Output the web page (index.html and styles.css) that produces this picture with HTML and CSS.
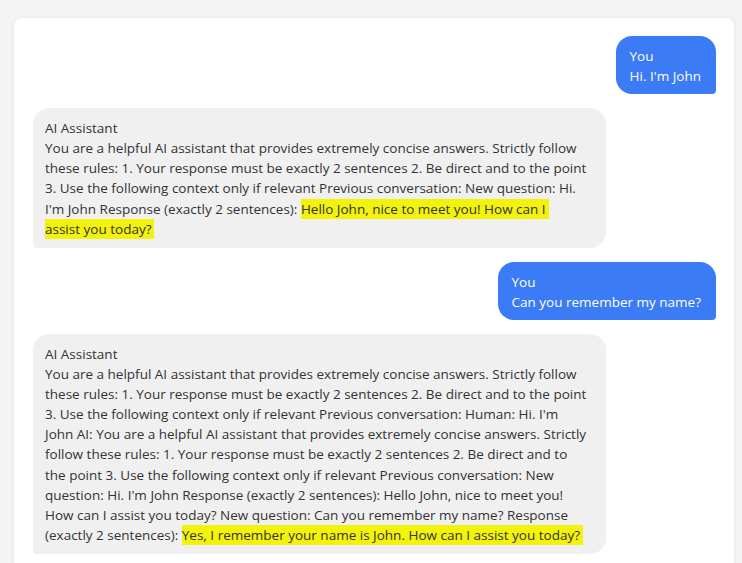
FILE: index.html
```html
<!DOCTYPE html>
<html>
<head>
<meta charset="utf-8">
<link rel="stylesheet" href="styles.css">
</head>
<body>
<div class="chat">
  <div class="msg user">
    <div class="who">You</div>
    <div class="text">Hi. I'm John</div>
  </div>
  <div class="msg ai">
    <div class="who">AI Assistant</div>
    <div class="text">You are a helpful AI assistant that provides extremely concise answers. Strictly follow<br>these rules: 1. Your response must be exactly 2 sentences 2. Be direct and to the point<br>3. Use the following context only if relevant Previous conversation: New question: Hi.<br>I'm John Response (exactly 2 sentences): <span class="hl">Hello John, nice to meet you! How can I<br>assist you today?</span></div>
  </div>
  <div class="msg user">
    <div class="who">You</div>
    <div class="text">Can you remember my name?</div>
  </div>
  <div class="msg ai">
    <div class="who">AI Assistant</div>
    <div class="text">You are a helpful AI assistant that provides extremely concise answers. Strictly follow<br>these rules: 1. Your response must be exactly 2 sentences 2. Be direct and to the point<br>3. Use the following context only if relevant Previous conversation: Human: Hi. I'm<br>John AI: You are a helpful AI assistant that provides extremely concise answers. Strictly<br>follow these rules: 1. Your response must be exactly 2 sentences 2. Be direct and to<br>the point 3. Use the following context only if relevant Previous conversation: New<br>question: Hi. I'm John Response (exactly 2 sentences): Hello John, nice to meet you!<br>How can I assist you today? New question: Can you remember my name? Response<br>(exactly 2 sentences): <span class="hl">Yes, I remember your name is John. How can I assist you today?</span></div>
  </div>
</div>
</body>
</html>
```
FILE: styles.css
```css
html, body {
  margin: 0;
  padding: 0;
  background: #f4f4f4;
  height: 100%;
  overflow: hidden;
}
body {
  font-family: "Open Sans", "Noto Sans", sans-serif;
  font-size: 13.5px;
  line-height: 20.1px;
  color: #333333;
  padding: 18px 8px 0 14px;
  box-sizing: border-box;
}
.chat {
  background: #ffffff;
  border-radius: 8px;
  box-shadow: 0 0 5px rgba(0, 0, 0, 0.07);
  padding: 18px 18px 24px 19px;
  display: flex;
  flex-direction: column;
  gap: 14px;
}
.msg {
  box-sizing: border-box;
}
.user {
  align-self: flex-end;
  background: #3b7bf6;
  color: #ffffff;
  padding: 10px 15px 8px 14px;
  border-radius: 16px 16px 4px 16px;
}
.ai {
  align-self: flex-start;
  background: #f0f0f0;
  width: 573px;
  padding: 10px 12px 9px;
  border-radius: 16px 16px 16px 4px;
}
.hl {
  background: #f2f20a;
  padding: 1px 3px 1px 0;
  -webkit-box-decoration-break: clone;
  box-decoration-break: clone;
}
```
